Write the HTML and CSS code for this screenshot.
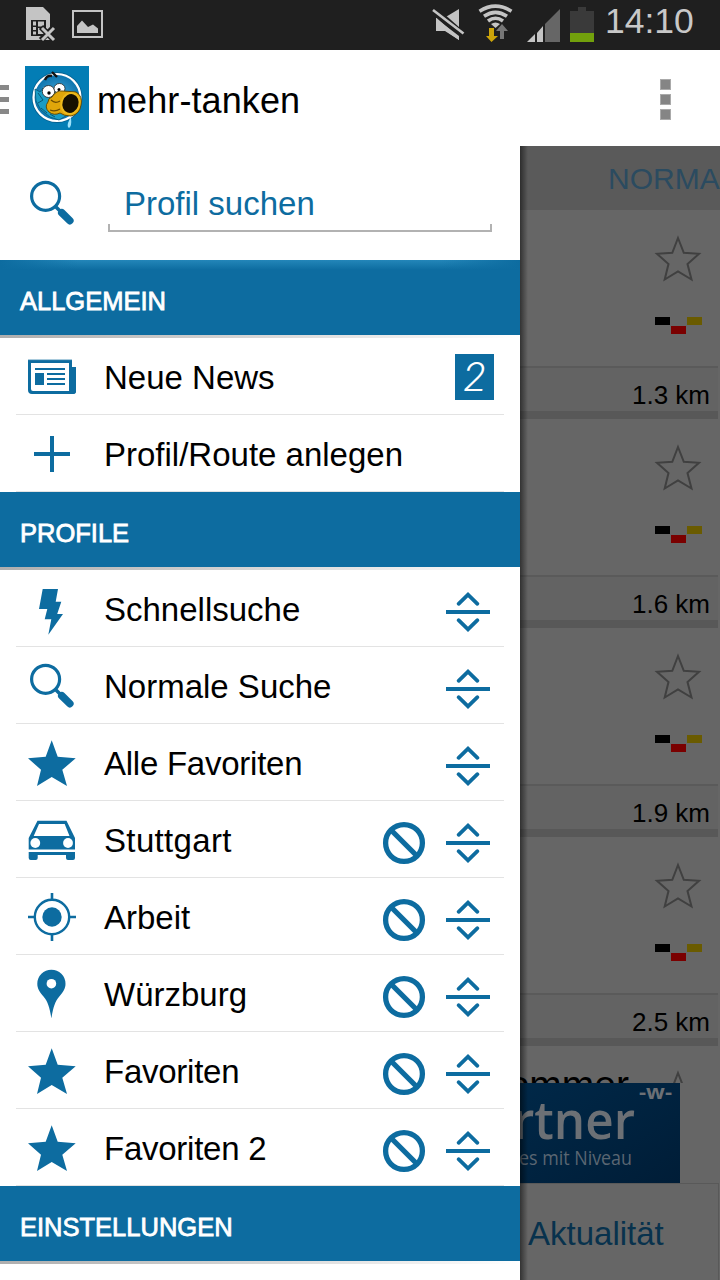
FILE: index.html
```html
<!DOCTYPE html>
<html lang="de">
<head>
<meta charset="utf-8">
<title>mehr-tanken</title>
<link rel="stylesheet" href="styles.css">
</head>
<body>
<svg class="sprite" aria-hidden="true">
  <symbol id="search" viewBox="0 0 48 48"><circle cx="17.6" cy="17.3" r="14" fill="none" stroke="currentColor" stroke-width="3.2"/><path d="M27 27l7 7" stroke="currentColor" stroke-width="3.6"/><path d="M33.800 33.800l8 7.800" stroke="currentColor" stroke-width="7.600" stroke-linecap="round"/></symbol>
  <symbol id="star" viewBox="0 0 48 48"><path fill="currentColor" d="M23.700 1.200L29.700 17.700 47.700 19.300 34.300 30.700 39 47 23.700 38 9 47 13 30.700 0 19.300 17.700 17.700z"/></symbol>
  <symbol id="sort" viewBox="0 0 44 44"><path d="M12.600 13.800L22 4.700l9.400 9.100M12.600 30.200l9.400 9.100 9.400-9.100" fill="none" stroke="currentColor" stroke-width="3.800" stroke-linecap="round"/><path d="M0 20h44v4H0z" fill="currentColor"/></symbol>
  <symbol id="ban" viewBox="0 0 44 44"><circle cx="22" cy="22" r="18.400" fill="none" stroke="currentColor" stroke-width="5.300"/><path d="M9 9l26 26" stroke="currentColor" stroke-width="5.300"/></symbol>
  <symbol id="outline-star" viewBox="0 0 48 48"><path fill="none" stroke="currentColor" stroke-width="2" d="M24 3L29.800 17.800 45 18.800 33.500 29 37.500 44.500 24 36.500 10.700 44.500 14.500 29 3 18.800 18.300 17.800z"/></symbol>
</svg>

<div class="screen">
  <header class="status">
    <div class="status-left">
      <svg class="sim" viewBox="0 0 30 36"><path fill="#c4c4c4" d="M0 1h17l7 7v26H0z"/><path fill="#1f1f1f" d="M5 14h15v16H5z"/><path fill="#c4c4c4" d="M7 15.500h3v4H7zm5 0h6v5h-6zM7 21h3v3H7zm5 1h6v6h-6zM7 25.500h3v3H7z"/><path d="M15 21l13 13M28 21L15 34" stroke="#1f1f1f" stroke-width="6"/><path d="M16 22l12 12M28 22L16 34" stroke="#c4c4c4" stroke-width="3"/></svg>
      <svg class="picture" viewBox="0 0 31 28"><path d="M1 1h29v26H1z" fill="none" stroke="#c4c4c4" stroke-width="2"/><path fill="#c4c4c4" d="M5 23v-7l5-5.500 6 6.500 5-2.500 5 4V23z"/></svg>
    </div>
    <div class="status-right">
      <svg class="mute" viewBox="0 0 32 34"><path fill="#c4c4c4" d="M3 12h8L26 3v31L12 25H3z"/><path d="M0 3.500L29 29" stroke="#1f1f1f" stroke-width="8"/><path d="M0 4l30.500 23.500" stroke="#c4c4c4" stroke-width="2.600"/><path fill="#c4c4c4" d="M3 12.500L26 30v4L13 25H3z"/></svg>
      <svg class="wifi" viewBox="0 0 35 38"><g fill="none" stroke="#c4c4c4" stroke-width="3.600"><path d="M1.500 7.200Q17.500-3 33.500 7.200M6 12.300Q17.500 4.500 29 12.300M10 17Q17.500 11.500 25 17"/></g><path fill="#c4c4c4" d="M13 20q4.500-3 9 0l-4.500 4z"/><path fill="#1f1f1f" d="M10 24h8v12h-8z"/><path fill="#cda50a" d="M11 24h5v8h4l-6.500 6L8 32h3z"/><path fill="#777" d="M24 20l6 7h-4v8h-4v-8h-4z"/></svg>
      <svg class="signal" viewBox="0 0 33 33"><path fill="#666" d="M18 15L33 0v33H18z"/><path fill="#c4c4c4" d="M0 33l8-8v8zM10 24l6-7v16h-6z"/></svg>
      <svg class="battery" viewBox="0 0 24 35"><path fill="#3a3a3a" d="M8 0h8v4h8v22H0V4h8z"/><path fill="#72a00c" d="M0 26h24v9H0z"/></svg>
      <span class="clock">14:10</span>
    </div>
  </header>

  <div class="appbar">
    <div class="menu"><i></i><i></i><i></i></div>
    <svg class="logo" viewBox="0 0 64 64">
      <defs><radialGradient id="sea"><stop offset="0" stop-color="#49a9d8"/><stop offset="1" stop-color="#0a72ac"/></radialGradient></defs>
      <path fill="#037db5" d="M0 0h64v64H0z"/>
      <circle cx="32" cy="31.500" r="25.500" fill="#06608f"/>
      <circle cx="32" cy="31.500" r="23.500" fill="url(#sea)" stroke="#fff" stroke-width="2.200"/>
      <path fill="#1a9cc4" stroke="#075878" stroke-width=".8" d="M10 23l5 3 3-4 2 4 12-4 10 4 2 22-10 6-9-3-9-7-5-9z"/>
      <path d="M13 27l5 7-5 3M16 42l6 5M25 48l5 3" fill="none" stroke="#075878"/>
      <ellipse cx="23.500" cy="25.500" rx="6.200" ry="6" fill="#fff" stroke="#222" stroke-width=".8"/>
      <ellipse cx="34.500" cy="22.500" rx="5.500" ry="5" fill="#fff" stroke="#222" stroke-width=".8"/>
      <circle cx="24" cy="27" r="1.700"/><circle cx="34" cy="23.500" r="1.500"/>
      <path fill="#e0a60a" stroke="#5c4300" stroke-width=".9" d="M27 31q4-7 11-6l13 1q7 4 5 13-1 9-10 11-7 0-11-3-6 3-11-1-5-5-1-10 0-4 4-5z"/>
      <path d="M26 34q4 4 9 1M25 44q5 2 10-1" fill="none" stroke="#6b4b00" stroke-width="1.200"/>
      <ellipse cx="45.500" cy="37.500" rx="9" ry="10.500" transform="rotate(18 45.500 37.500)" fill="#171000" stroke="#edb91c" stroke-width="2"/>
      <path d="M20 14q2-5 7-4M27 6l5 5" fill="none" stroke="#111" stroke-width="2.400"/>
      <path d="M45 52q-1 3-2 5-1 4 1 5 3-2 2-10" fill="#9ee2fb"/>
    </svg>
    <h1>mehr-tanken</h1>
    <div class="overflow"><i></i><i></i><i></i></div>
  </div>

  <div class="body">
    <nav class="drawer">
      <div class="searchrow">
        <svg class="icon"><use href="#search"/></svg>
        <div class="field">Profil suchen</div>
      </div>

      <h2 class="section first">ALLGEMEIN</h2>
      <div class="strip"></div>
      <div class="row">
        <svg class="icon" viewBox="0 0 48 48"><path fill="currentColor" d="M0 7h44v7h4v24q0 3-3 3H4q-4 0-4-4z"/><path fill="#fff" d="M3 10h38v25q0 3 2 3H5q-2 0-2-2z"/><path fill="currentColor" d="M41 14h7v24q0 3-3 3-4 0-4-4zM7 15h30v2H7zM7 20h9v12H7zM19 20h18v2H19zM19 25h18v2H19zM19 30h18v2H19z"/><path d="M0 6.700h44" stroke="#78adc9" stroke-width=".8"/></svg>
        <span class="label">Neue News</span><span class="badge">2</span>
      </div>
      <div class="row">
        <svg class="icon" viewBox="0 0 48 48"><path fill="currentColor" d="M22 6h4v16h16v4H26v16h-4V26H6v-4h16z"/></svg>
        <span class="label">Profil/Route anlegen</span>
      </div>

      <h2 class="section">PROFILE</h2>
      <div class="strip"></div>
      <div class="row">
        <svg class="icon" viewBox="0 0 48 48"><path fill="currentColor" d="M14.700 4H30l-2.300 12.700h5.600L29.200 29H35L20.300 49.700l3-15.400h-6.600L19.300 24H11z"/></svg>
        <span class="label">Schnellsuche</span><svg class="action"><use href="#sort"/></svg>
      </div>
      <div class="row">
        <svg class="icon"><use href="#search"/></svg>
        <span class="label">Normale Suche</span><svg class="action"><use href="#sort"/></svg>
      </div>
      <div class="row">
        <svg class="icon"><use href="#star"/></svg>
        <span class="label tight">Alle Favoriten</span><svg class="action"><use href="#sort"/></svg>
      </div>
      <div class="row">
        <svg class="icon" viewBox="0 0 48 48"><path fill="currentColor" fill-rule="evenodd" d="M9.500 4.700h29L47 22v11.500H.700V22zM11 8L5.700 20h35.800L36.700 8z"/><circle cx="7.300" cy="27" r="4.900" fill="#fff"/><circle cx="40" cy="27" r="4.900" fill="#fff"/><path fill="currentColor" d="M.700 36H47v6q0 2-2 2h-5q-2 0-2-2v-3H9.700v3q0 2-2 2h-5q-2 0-2-2z"/></svg>
        <span class="label loose">Stuttgart</span><svg class="action"><use href="#ban"/></svg><svg class="action"><use href="#sort"/></svg>
      </div>
      <div class="row">
        <svg class="icon" viewBox="0 0 48 48"><circle cx="24" cy="24" r="9.700" fill="currentColor"/><circle cx="24" cy="24" r="17.200" fill="none" stroke="currentColor" stroke-width="2.400"/><path d="M24 0v8M24 40v8M0 24h8M40 24h8" stroke="currentColor" stroke-width="2.600"/></svg>
        <span class="label">Arbeit</span><svg class="action"><use href="#ban"/></svg><svg class="action"><use href="#sort"/></svg>
      </div>
      <div class="row">
        <svg class="icon" viewBox="0 0 48 48"><path fill="currentColor" d="M23.400-.300A14.100 14.100 0 0 0 9.300 13.800C9.300 19 12 22.500 15.500 26.500 20 32 21.500 37 23.400 48.300 25.300 37 26.800 32 31.300 26.500 34.800 22.500 37.500 19 37.500 13.800A14.100 14.100 0 0 0 23.400-.300z"/><circle cx="23.400" cy="13.700" r="4.800" fill="#fff"/></svg>
        <span class="label">Würzburg</span><svg class="action"><use href="#ban"/></svg><svg class="action"><use href="#sort"/></svg>
      </div>
      <div class="row">
        <svg class="icon"><use href="#star"/></svg>
        <span class="label tight">Favoriten</span><svg class="action"><use href="#ban"/></svg><svg class="action"><use href="#sort"/></svg>
      </div>
      <div class="row">
        <svg class="icon"><use href="#star"/></svg>
        <span class="label tight">Favoriten 2</span><svg class="action"><use href="#ban"/></svg><svg class="action"><use href="#sort"/></svg>
      </div>

      <h2 class="section">EINSTELLUNGEN</h2>
      <div class="strip"></div>
    </nav>

    <main class="content">
      <div class="tab">NORMA</div>
      <article class="card"><div class="info"><svg class="fav"><use href="#outline-star"/></svg><div class="flag"><i></i><i></i><i></i></div></div><div class="distance">1.3 km</div></article>
      <article class="card"><div class="info"><svg class="fav"><use href="#outline-star"/></svg><div class="flag"><i></i><i></i><i></i></div></div><div class="distance">1.6 km</div></article>
      <article class="card"><div class="info"><svg class="fav"><use href="#outline-star"/></svg><div class="flag"><i></i><i></i><i></i></div></div><div class="distance">1.9 km</div></article>
      <article class="card"><div class="info"><svg class="fav"><use href="#outline-star"/></svg><div class="flag"><i></i><i></i><i></i></div></div><div class="distance">2.5 km</div></article>
      <article class="peek"><span class="station">ommer</span><svg class="fav"><use href="#outline-star"/></svg></article>
      <svg class="banner" viewBox="0 0 160 100">
        <defs><linearGradient id="navy" x1="0" y1="0" x2="1" y2="1"><stop offset="0" stop-color="#002848"/><stop offset="1" stop-color="#001d37"/></linearGradient></defs>
        <path fill="url(#navy)" d="M0 0h160v100H0z"/>
        <text class="ad-mark" x="119" y="16" textLength="33" lengthAdjust="spacingAndGlyphs">-w-</text>
        <text class="ad-title" x="-7" y="56" textLength="122" lengthAdjust="spacingAndGlyphs">rtner</text>
        <text class="ad-sub" x="-1" y="82" textLength="113" lengthAdjust="spacingAndGlyphs">es mit Niveau</text>
      </svg>
      <footer class="bottom">Aktualität</footer>
    </main>
  </div>
</div>
</body>
</html>
```
FILE: styles.css
```css
* { box-sizing: border-box; }
body { margin: 0; font-family: "Liberation Sans", Arial, sans-serif; background: #fff; }
svg { display: block; flex: none; overflow: visible; }
.sprite { position: absolute; width: 0; height: 0; overflow: hidden; }
.screen { width: 720px; height: 1280px; overflow: hidden; display: flex; flex-direction: column; }

.status { height: 50px; flex: none; background: #1f1f1f; display: flex; justify-content: space-between; padding: 0 26px; }
.status-left, .status-right { display: flex; align-items: flex-start; }
.sim { width: 30px; height: 36px; margin: 6px 16px 0 0; }
.picture { width: 31px; height: 28px; margin-top: 10px; }
.mute { width: 32px; height: 34px; margin: 6px 13px 0 0; }
.wifi { width: 35px; height: 38px; margin: 4px 14px 0 0; }
.signal { width: 33px; height: 33px; margin: 9px 10px 0 0; }
.battery { width: 24px; height: 35px; margin: 7px 11px 0 0; }
.clock { width: 89px; font-size: 35.5px; line-height: 42px; color: #c8c8c8; white-space: nowrap; }

.appbar { height: 96px; flex: none; display: flex; align-items: center; padding-right: 49px; }
.menu { width: 25px; display: flex; flex-direction: column; gap: 7px; margin-top: 3px; }
.menu i { width: 9px; height: 5px; background: #888; }
.logo { width: 64px; height: 64px; }
h1 { margin: 0 0 0 8px; padding-top: 5px; flex: 1; font-size: 36px; font-weight: 400; line-height: 44px; letter-spacing: .1px; color: #000; }
.overflow { display: flex; flex-direction: column; gap: 4px; margin-top: 3px; }
.overflow i { width: 11px; height: 11px; background: #858585; border: 1px solid #aaa; }

.body { flex: 1; min-height: 0; display: flex; }
.drawer { width: 520px; flex: none; background: #fff; color: #0d6ca0; }
.searchrow { height: 114px; display: flex; align-items: center; padding: 0 28px; gap: 32px; }
.field { width: 384px; height: 54px; margin-top: 4px; padding-left: 16px; font-size: 33px; line-height: 52px; border-bottom: 2px solid #b2b2b2;
  background: linear-gradient(#b2b2b2, #b2b2b2) left bottom / 2px 6px no-repeat, linear-gradient(#b2b2b2, #b2b2b2) right bottom / 2px 6px no-repeat; }
.section { height: 75px; margin: 0; padding: 4px 20px 0; background: #0d6ca0; color: #fff; font-size: 25.5px; font-weight: 400; line-height: 75px; -webkit-text-stroke: .8px #fff; }
.first { background: linear-gradient(90deg, #0d6ca0, transparent 15%, transparent 85%, #0d6ca0), linear-gradient(#2386b9, #0d6ca0 10px); }
.strip { height: 3px; background: linear-gradient(90deg, #aeaeae, #fff); }
.row { height: 77px; margin: 0 16px; padding: 0 14px 0 12px; display: flex; align-items: center; gap: 20px; border-bottom: 1px solid #e3e3e3; }
.icon { width: 48px; height: 48px; margin-top: 2px; }
.searchrow .icon { margin-top: 0; }
.label { flex: 1; margin-left: 8px; padding-top: 3px; font-size: 33px; line-height: 40px; color: #000; white-space: nowrap; }
.tight { letter-spacing: -.25px; }
.loose { letter-spacing: .35px; }
.action { width: 44px; height: 44px; margin-top: 8px; }
.badge { width: 39px; height: 46px; margin: 1px -4px 0 0; background: #0d6ca0; color: #fff; font: italic 300 41px/47px Roboto, sans-serif; text-align: center; }

.content { flex: 1; min-width: 0; display: flex; flex-direction: column; overflow: hidden; background: #666; position: relative; }
.content::before { content: ""; position: absolute; z-index: 2; left: 0; top: 0; bottom: 0; width: 8px; background: linear-gradient(90deg, rgba(0,0,0,.5), transparent); }
.tab { height: 64px; flex: none; padding-left: 88px; background: #5a5a5a; color: #2b4b60; font-size: 30px; line-height: 66px; white-space: nowrap; overflow: hidden; }
.card { height: 209px; flex: none; margin-right: 2px; border-bottom: 8px solid #585858; }
.info { height: 158px; border-bottom: 2px solid #5a5a5a; padding: 25px 16px 0 0; display: flex; flex-direction: column; align-items: flex-end; gap: 34px; }
.fav { width: 48px; height: 48px; color: #404040; }
.flag { display: flex; gap: 1px; }
.flag i { width: 15px; height: 8px; background: #000; }
.flag i:nth-child(2) { background: #7a0000; margin-top: 9px; }
.flag i:nth-child(3) { background: #6a5b00; }
.distance { height: 43px; padding-right: 8px; text-align: right; font-size: 26px; line-height: 54px; color: #000; background: #636363; }
.peek { height: 37px; flex: none; overflow: hidden; display: flex; justify-content: flex-end; align-items: flex-start; gap: 25px; padding: 18px 18px 0 0; }
.peek .fav { margin-top: 6px; }
.station { font-size: 39px; line-height: 42px; color: #000; }
.banner { width: 160px; height: 100px; overflow: hidden; }
.ad-mark, .ad-title, .ad-sub { font-family: "Open Sans", sans-serif; fill: #6c7075; }
.ad-mark { font-size: 20px; font-weight: 700; }
.ad-title { font-size: 52px; font-weight: 600; }
.ad-sub { font-size: 20px; fill: #5a6672; }
.bottom { flex: 1; margin-right: 1px; border-top: 1px solid #595959; border-right: 1px solid #595959; padding-left: 8px; font-size: 33px; line-height: 100px; color: #08324d; }
```
